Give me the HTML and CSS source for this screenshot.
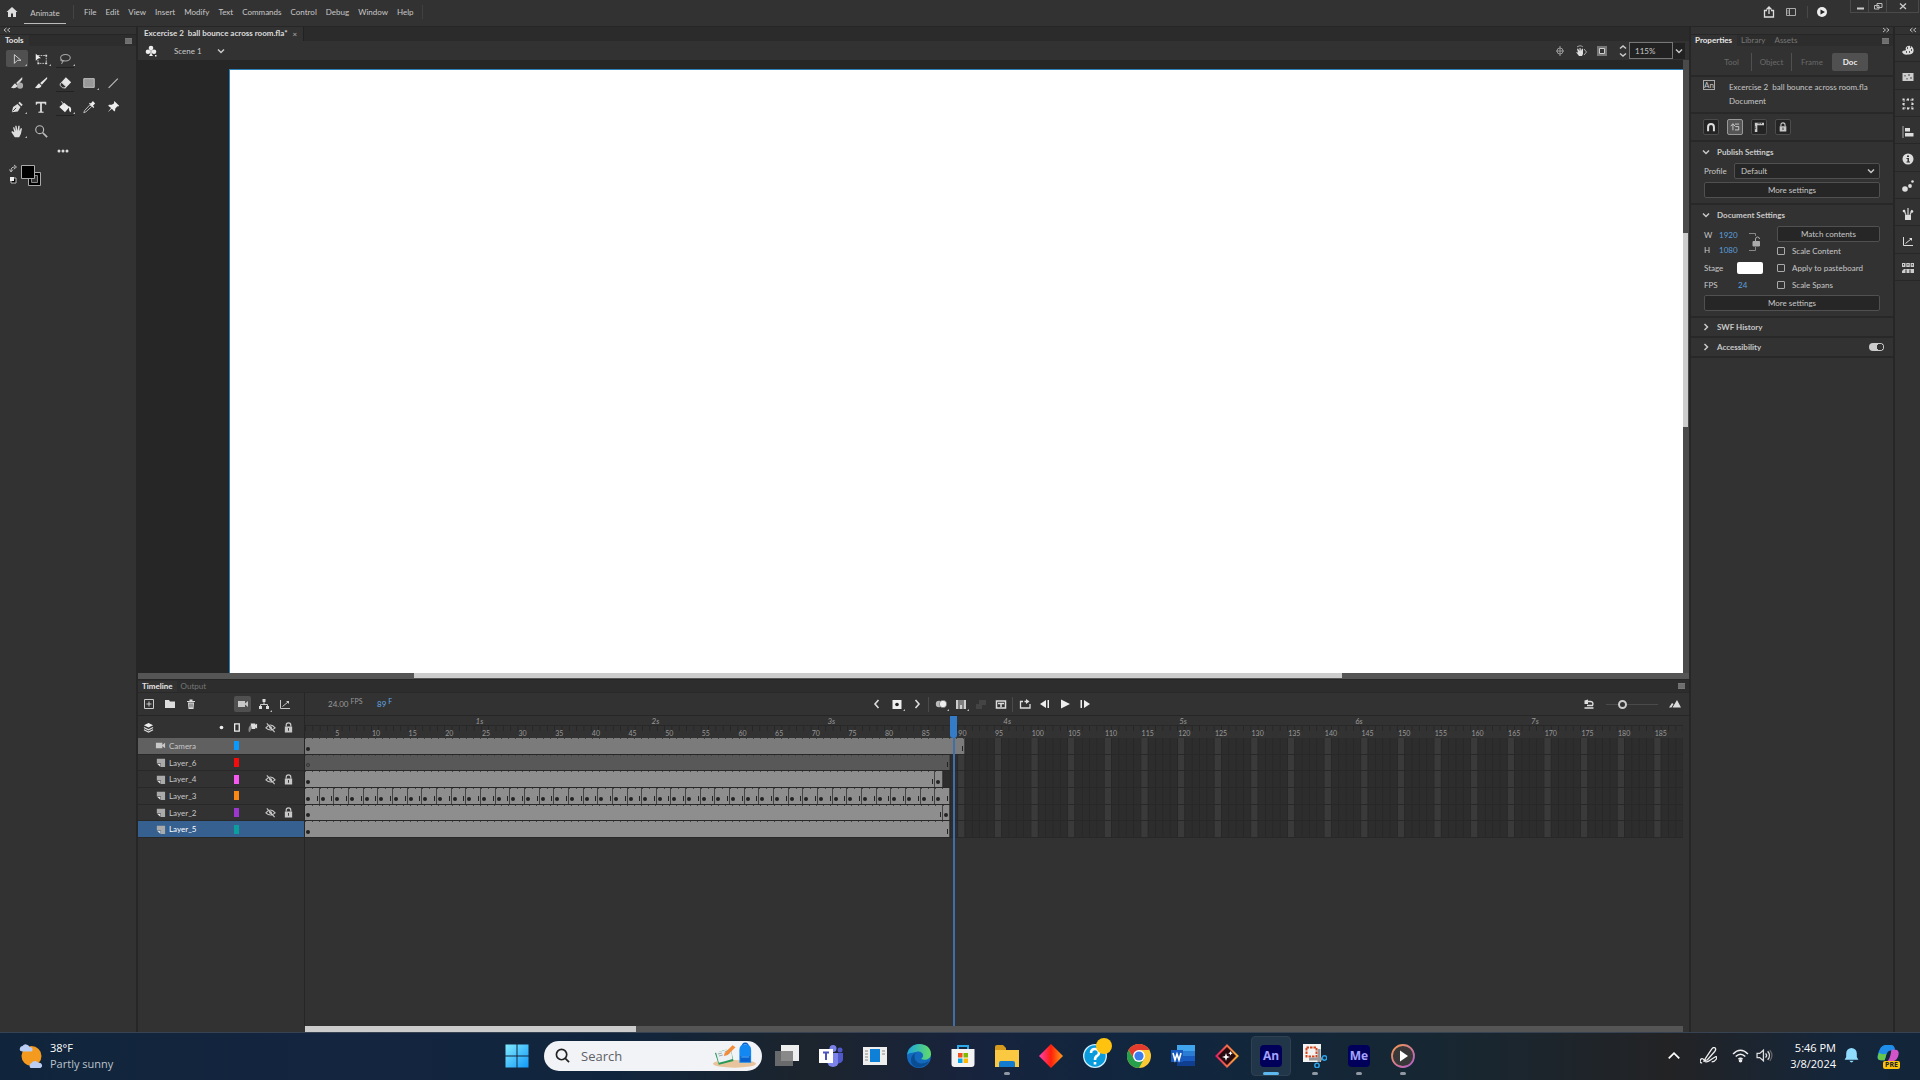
FILE: index.html
```html
<!DOCTYPE html>
<html lang="en">
<head>
  <meta charset="UTF-8">
  <meta name="viewport" content="width=device-width, initial-scale=1.0">
  <title>Animate</title>
  <link rel="stylesheet" href="styles.css">
</head>
<body>
  <!-- shared icons -->
  <svg class="sprite" aria-hidden="true">
    <symbol id="i-eye" viewBox="0 0 12 12"><path d="M1 6.500Q6 0 11 6.500Q6 11 1 6.500Z M2 1.500L10.500 11" fill="none" stroke="currentColor" stroke-width="1.200"/><circle cx="6" cy="6" r="1.500" fill="currentColor"/></symbol>
    <symbol id="i-lock" viewBox="0 0 12 12"><path d="M3.500 5V3.500a2.500 2.500 0 0 1 5 0V5" fill="none" stroke="currentColor" stroke-width="1.300"/><path fill-rule="evenodd" d="M2 5h8v6.500H2z M5.500 6.500v3h1v-3z" fill="currentColor"/></symbol>
    <symbol id="i-cam" viewBox="0 0 12 12"><path d="M1 3h7v6H1z M8 5.500L11 3v6L8 6.500z" fill="currentColor"/></symbol>
    <symbol id="i-layer" viewBox="0 0 12 12"><path d="M2 2h9v9H6.500V7H2z" fill="#aaa"/><path d="M2.500 7.500H6V11z" fill="#ddd"/></symbol>
    <symbol id="i-down" viewBox="0 0 10 10"><path d="M2 3.500L5 6.500L8 3.500" fill="none" stroke="currentColor" stroke-width="1.500"/></symbol>
    <symbol id="i-right" viewBox="0 0 10 10"><path d="M3.500 2L6.500 5L3.500 8" fill="none" stroke="currentColor" stroke-width="1.500"/></symbol>
    <symbol id="i-menu" viewBox="0 0 8 6"><path d="M0 0h7v6H0z" fill="#777"/><path d="M0 2h7M0 4h7" stroke="#555" stroke-width=".5"/></symbol>
    <symbol id="i-chev" viewBox="0 0 8 6"><path d="M3.500 1L1 3l2.500 2M7 1L4.500 3L7 5" fill="none" stroke="#bbb"/></symbol>
    <symbol id="i-graph" viewBox="0 0 12 12"><path d="M1.500 2v8.500H11M3.500 8.500L9 4" fill="none" stroke="currentColor"/><path d="M7 3h3v3z" fill="currentColor"/></symbol>
  </svg>

  <header class="topbar">
    <button class="home" aria-label="Home"><svg viewBox="0 0 12 12"><path d="M6 1L0.500 6H2v5h3V7.500h2V11h3V6h1.500z"/></svg></button>
    <span class="app-name">Animate</span>
    <nav class="menu">
      <button>File</button><button>Edit</button><button>View</button><button>Insert</button><button>Modify</button><button>Text</button><button>Commands</button><button>Control</button><button>Debug</button><button>Window</button><button>Help</button>
    </nav>
    <div class="top-actions">
      <button aria-label="Share"><svg viewBox="0 0 12 12" fill="none" stroke="#ddd" stroke-width="1.300"><path d="M4 4.500H1.500V11h9V4.500H8M6 8V1.500M3.500 3.500L6 1l2.500 2.500"/></svg></button>
      <button aria-label="Workspaces"><svg viewBox="0 0 12 12" fill="none" stroke="#aaa"><path d="M1.500 2.500h9v7h-9zM4.500 2.500v7"/><path d="M3 4v4" stroke="#888"/></svg></button>
      <button class="test" aria-label="Test movie"><svg viewBox="0 0 12 12"><circle cx="6" cy="6" r="5" fill="#eee"/><path d="M4.500 3.500v5L9 6z" fill="#222"/></svg></button>
    </div>
    <div class="win">
      <button aria-label="Minimize"><svg viewBox="0 0 12 12"><path d="M3 8.500h7" stroke="#ccc" stroke-width="2"/></svg></button>
      <button aria-label="Restore"><svg viewBox="0 0 12 12" fill="none" stroke="#bbb"><path d="M5 3.500h5v4H5zM2.500 5.500H7V9H2.500z"/></svg></button>
      <button class="close" aria-label="Close"><svg viewBox="0 0 12 12"><path d="M3 3.500L9 9M9 3.500L3 9" stroke="#ccc" stroke-width="1.300"/></svg></button>
    </div>
  </header>

  <main class="workspace">
    <aside class="tools">
      <div class="strip"><svg class="chev"><use href="#i-chev"/></svg></div>
      <div class="tabs"><span class="tab active">Tools</span><svg class="menu-icon"><use href="#i-menu"/></svg></div>
      <div class="tool-grid">
        <button class="on more" aria-label="Selection"><svg viewBox="0 0 16 16" fill="none" stroke="#ddd"><path d="M5 3l7.500 6.500H8.500L5 13z"/></svg></button>
        <button class="more" aria-label="Free transform"><svg viewBox="0 0 16 16"><path d="M4.500 4H14v9H4.500z" fill="none" stroke="#ccc" stroke-dasharray="2 1"/><path d="M2 2l6 5H5L2 10z" fill="#eee"/><path d="M13 3h2v2h-2zM13 12h2v2h-2zM4 12h2v2H4z" fill="#ddd"/></svg></button>
        <button class="more line" aria-label="Lasso"><svg viewBox="0 0 16 16" fill="none" stroke="#aaa" stroke-width="1.200"><ellipse cx="8.500" cy="6.500" rx="5.500" ry="3.700"/><path d="M4 8c-2 2 1 3 3 2M5 9.500c1 2 0 3-1 4"/></svg></button>
        <i></i><i></i>
        <button aria-label="Fluid brush"><svg viewBox="0 0 16 16"><path d="M14 1L7 8l2 2 5-6zM6 8.500c-2 0-2 3-5 4.500C4 15 8 13.500 8.500 11z" fill="#ddd"/><circle cx="11.500" cy="11" r="3.500" fill="#aaa"/></svg></button>
        <button aria-label="Brush"><svg viewBox="0 0 16 16"><path d="M15 1L7 8l2 2 6-7zM6 8.500c-2 0-2 3-5 4.500C4 15 8 13.500 8.500 11z" fill="#e5e5e5"/></svg></button>
        <button class="line" aria-label="Eraser"><svg viewBox="0 0 16 16"><path d="M9 1.500L15 7l-7 7.500L2 9z" fill="#e5e5e5"/><path d="M4.200 7.500L9 12l-1.500 1.500H5.500L2.500 11V9z" fill="#333" stroke="#ccc"/></svg></button>
        <button class="more" aria-label="Rectangle"><svg viewBox="0 0 16 16"><path d="M2 3h12v10H2z" fill="#999" stroke="#ccc"/></svg></button>
        <button aria-label="Line"><svg viewBox="0 0 16 16"><path d="M3 13.500L13.500 3" stroke="#bbb" stroke-width="1.400"/></svg></button>
        <button class="more" aria-label="Pen"><svg viewBox="0 0 16 16"><path d="M2 14L3.500 8l5-3.500L12 8l-3 5z M9.500 3.500L11 2l3.500 3.500L13 7z" fill="#ddd"/><path d="M3 13l4-4" stroke="#333"/></svg></button>
        <button aria-label="Text"><svg viewBox="0 0 16 16"><path d="M2 2h12v3.500h-1L12 4H9v9l2 .5v1H5v-1l2-.5V4H4L3 5.500H2z" fill="#ddd"/></svg></button>
        <button class="more line" aria-label="Paint bucket"><svg viewBox="0 0 16 16"><path d="M7 3l6 5-5 6L1.500 8z M12.500 7c3 1 3 4 2 7-2-1-2-3-2-6z" fill="#eee"/><path d="M4 1.500l4 6" stroke="#ddd"/></svg></button>
        <button aria-label="Eyedropper"><svg viewBox="0 0 16 16"><path d="M9 5.500L3 12l-1 2.500 2.500-1L11 7.500z" fill="none" stroke="#ccc"/><path d="M8 4l5 5 1-1-1.500-1.500L15 4 12.500 1 10 4 9 3z" fill="#eee"/></svg></button>
        <button aria-label="Asset warp"><svg viewBox="0 0 16 16"><path d="M9.500 1l5.500 5.500-1 1-1-.3L10.500 10v2l-1 1L6.700 10 2 14l3.800-5L2.500 6.500 3.500 5.500h3L9 4z" fill="#eee"/></svg></button>
        <button class="more" aria-label="Hand"><svg viewBox="0 0 16 16"><path d="M5.500 15L1.500 9 2.500 8l2.500 1.500L3.500 4l1.200-.5L6.500 8 6 2h1.500L8.500 8l1-6H11l-.3 6L12.500 4.500l1.200.5-1.200 6-2 4z" fill="#ddd"/></svg></button>
        <button aria-label="Zoom"><svg viewBox="0 0 16 16" fill="none" stroke="#bbb" stroke-width="1.300"><circle cx="6.500" cy="6.500" r="4.500"/><path d="M10 10l5 5" stroke-width="2"/></svg></button>
      </div>
      <button class="edit-tools" aria-label="Edit toolbar"><svg viewBox="0 0 12 4" fill="#ddd"><circle cx="2" cy="2" r="1.500"/><circle cx="6" cy="2" r="1.500"/><circle cx="10" cy="2" r="1.500"/></svg></button>
      <svg class="swatches" viewBox="0 0 36 24"><path d="M2 7c0-3 1-4 4-4M5 1l2.500 2L5 5M.5 5.500L2 8l2-2.500" fill="none" stroke="#bbb"/><path d="M2 14h5v5H2z" fill="#000" stroke="#bbb"/><path d="M1 13h4v4H1z" fill="#eee"/><path d="M19.500 8.500h12v13h-12z" fill="#000" stroke="#aaa"/><path d="M22.500 11.500h6v7h-6z" fill="#333" stroke="#888"/><path d="M12.500 1.500h13v13h-13z" fill="#000" stroke="#aaa"/></svg>
    </aside>

    <section class="center">
      <div class="doc-tabs"><div class="doc-tab">Excercise 2&nbsp; ball bounce across room.fla*<button aria-label="Close tab">×</button></div></div>
      <div class="scene-bar">
        <svg class="club" viewBox="0 0 12 12" fill="#eee"><circle cx="6" cy="3" r="2.300"/><circle cx="3" cy="6.700" r="2.300"/><circle cx="9" cy="6.700" r="2.300"/><path d="M5.300 4h1.400v5l1.300 2H4l1.300-2zM10 10h1.500v1.500H10z"/></svg>
        <span class="scene-name">Scene 1</span>
        <svg class="i10"><use href="#i-down"/></svg>
        <div class="scene-actions">
          <svg viewBox="0 0 12 12" fill="none" stroke="#999"><circle cx="6" cy="6" r="3"/><path d="M6 1v10M2 6h8"/></svg>
          <svg viewBox="0 0 12 12"><path d="M4 11L1 7l2 .5L2 4l1-.5L4.500 6V3h1l.5 3 1-2.500 1 .5V9l-1 2z" fill="#ddd"/><path d="M2 2c3-2 5-1 6 0M9 4l2.500 3L9 10" fill="none" stroke="#aaa"/></svg>
          <svg viewBox="0 0 12 12"><path d="M1 1h10v10H1z" fill="#777"/><path d="M3.500 3.500h5v5h-5z" fill="#333" stroke="#ccc"/></svg>
          <svg viewBox="0 0 12 12" fill="none" stroke="#ccc" stroke-width="1.500"><path d="M3 3.500L6 1l3 2.500M3 8.500L6 11l3-2.500"/></svg>
        </div>
        <input class="zoom" type="text" value="115%" aria-label="Zoom">
        <button class="zoom-open" aria-label="Zoom levels"><svg class="i10"><use href="#i-down"/></svg></button>
      </div>
      <div class="canvas">
        <div class="pasteboard"><div class="stage"></div></div>
        <div class="vscroll"><div class="vthumb"></div></div>
      </div>
      <div class="hscroll"><div class="hthumb"></div></div>

      <div class="timeline">
        <div class="tabs"><span class="tab active">Timeline</span><span class="tab">Output</span><svg class="menu-icon"><use href="#i-menu"/></svg></div>
        <div class="tl-toolbar">
          <div class="layer-tools">
            <button aria-label="New layer"><svg viewBox="0 0 12 12" fill="none" stroke="#ccc"><path d="M1.500 1.500h9v9h-9zM6 3.500v5M3.500 6h5"/></svg></button>
            <button aria-label="New folder"><svg viewBox="0 0 12 12"><path d="M1 2h4l1 1.500h5V10H1z" fill="#ddd"/></svg></button>
            <button aria-label="Delete"><svg viewBox="0 0 12 12"><path d="M2 3h8v1H2zM4.500 1.500h3V3h-3zM3 4.500h6L8.500 11h-5z" fill="#ddd"/><path d="M5 5.500v4M7 5.500v4" stroke="#555"/></svg></button>
            <button class="cam on" aria-label="Camera"><svg><use href="#i-cam"/></svg></button>
            <button class="more" aria-label="Parenting"><svg viewBox="0 0 12 12"><path d="M4.500 1h3v3h-3zM1 8h3v3H1zM8 8h3v3H8z" fill="#ddd"/><path d="M6 4v2M2.500 8V6.500h7V8" fill="none" stroke="#ccc"/></svg></button>
            <button aria-label="Graph"><svg><use href="#i-graph"/></svg></button>
          </div>
          <div class="frame-tools">
            <span class="fps">24.00 <sup>FPS</sup></span>
            <span class="frame-no">89 <sup>F</sup></span>
            <div class="play-tools">
              <button aria-label="Previous keyframe"><svg viewBox="0 0 12 12" fill="none" stroke="#ddd" stroke-width="1.600"><path d="M7.500 2L4 6l3.500 4"/></svg></button>
              <button class="more" aria-label="Insert keyframe"><svg viewBox="0 0 12 12"><path d="M1.500 2h9v9h-9z" fill="#eee"/><circle cx="6" cy="6.500" r="1.800" fill="#222"/></svg></button>
              <button aria-label="Next keyframe"><svg viewBox="0 0 12 12" fill="none" stroke="#ddd" stroke-width="1.600"><path d="M4.500 2L8 6l-3.500 4"/></svg></button>
              <hr>
              <button class="more" aria-label="Onion skin"><svg viewBox="0 0 12 12"><circle cx="4" cy="6" r="3.200" fill="#bbb"/><circle cx="8" cy="6" r="3.700" fill="#eee" stroke="#444" stroke-width=".5"/></svg></button>
              <button class="more" aria-label="Edit multiple frames"><svg viewBox="0 0 12 12"><path d="M1 2h2.500v9H1zM4.500 2h3v9h-3zM8.500 2H11v9H8.500z" fill="#ccc"/><path d="M6 2v5" stroke="#333"/></svg></button>
              <button aria-label="Create tween" disabled><svg viewBox="0 0 12 12"><path d="M4 2h7v5H4zM1 6h6v5H1z" fill="#444"/></svg></button>
              <button aria-label="Split"><svg viewBox="0 0 12 12"><path d="M1.500 3h9v7h-9z" fill="none" stroke="#ddd" stroke-width="1.500"/><path d="M6 5v4M3 5.500h6" stroke="#ddd" stroke-width="1.500"/></svg></button>
              <hr>
              <button aria-label="Loop"><svg viewBox="0 0 12 12"><path d="M4 3.500H1.500V10h9.500V6M5.500 3.500H8" fill="none" stroke="#ddd" stroke-width="1.300"/><path d="M7 1l3.500 2.500L7 6z" fill="#ddd"/></svg></button>
              <button aria-label="Step back"><svg viewBox="0 0 12 12"><path d="M7 2v8L1 6zM8.500 2H10v8H8.500z" fill="#eee"/></svg></button>
              <button aria-label="Play"><svg viewBox="0 0 12 12"><path d="M2 1.500L11 6l-9 4.500z" fill="#eee"/></svg></button>
              <button aria-label="Step forward"><svg viewBox="0 0 12 12"><path d="M1.500 2H3v8H1.500zM5 2l6 4-6 4z" fill="#eee"/></svg></button>
            </div>
            <div class="tl-zoom">
              <button aria-label="Reset zoom"><svg viewBox="0 0 12 12"><path d="M4 7.500h5.500Q11 4 7.500 3.500H4M1.500 10h9" fill="none" stroke="#ddd" stroke-width="1.400"/><path d="M5 1.500v4.500L1.500 6V2.500z" fill="#ddd"/></svg></button>
              <input type="range" min="0" max="100" value="28" aria-label="Timeline zoom">
              <button aria-label="Frame size"><svg viewBox="0 0 12 12"><path d="M3.500 9.500L8 2l4 7.500zM0 9.500L3 5l1.500 1-2 3.500z" fill="#ddd"/></svg></button>
            </div>
          </div>
        </div>
        <div class="tl-body">
          <div class="layers">
            <div class="layer-head">
              <svg viewBox="0 0 12 12" class="stack"><path d="M6 1l5 2.500L6 6 1 3.500z" fill="#eee"/><path d="M1 6l5 2.500L11 6M1 8.500L6 11l5-2.500" fill="none" stroke="#ddd" stroke-width="1.200"/></svg>
              <svg viewBox="0 0 12 12"><circle cx="6" cy="6" r="2" fill="#eee"/></svg>
              <svg viewBox="0 0 12 12"><path d="M4 2h5v8H4z" fill="none" stroke="#eee" stroke-width="1.400"/></svg>
              <svg viewBox="0 0 12 12"><path d="M4 1.500h5V3l2-1v5L9 6v1.500H5z" fill="#ddd"/><path d="M2 11c-1-4 0-6 2-8l1 4-2 4z" fill="#888"/></svg>
              <svg><use href="#i-eye"/></svg>
              <svg><use href="#i-lock"/></svg>
            </div>
            <div class="layer-rows" id="layerRows"></div>
          </div>
          <div class="frames">
            <div class="ruler"><div class="seconds" id="seconds"></div><div class="numbers" id="numbers"></div></div>
            <div class="frame-rows" id="frameRows"></div>
            <div class="playhead" id="playhead"></div>
          </div>
        </div>
        <div class="tl-scroll"><div class="tl-thumb"></div></div>
      </div>
    </section>

    <aside class="props">
      <div class="strip right"><svg class="chev flip"><use href="#i-chev"/></svg></div>
      <div class="tabs"><span class="tab active">Properties</span><span class="tab">Library</span><span class="tab">Assets</span><svg class="menu-icon"><use href="#i-menu"/></svg></div>
      <div class="subtabs"><button>Tool</button><button>Object</button><button>Frame</button><button class="on">Doc</button></div>
      <div class="doc-info">
        <span class="an-badge">An</span>
        <div><p>Excercise 2&nbsp; ball bounce across room.fla</p><p>Document</p></div>
      </div>
      <div class="snaps">
        <button aria-label="Snap to objects"><svg viewBox="0 0 12 12"><path d="M2.500 11V6a3.500 3.500 0 0 1 7 0v5" fill="none" stroke="#ddd" stroke-width="2.400"/></svg></button>
        <button class="on" aria-label="Snap align"><svg viewBox="0 0 12 12" fill="none" stroke="#ddd"><path d="M3.500 3v7M1 5l2.500-3L6 5M6 2.500h5M6.500 5.500h4v4H6"/></svg></button>
        <button aria-label="Rulers"><svg viewBox="0 0 12 12"><path d="M1 1h11v3H4v8H1z" fill="#ccc"/><path d="M5 1v1.500M7 1v1.500M9 1v1.500M1 6h1.500M1 8h1.500" stroke="#333"/></svg></button>
        <button aria-label="Lock guides"><svg><use href="#i-lock"/></svg></button>
      </div>
      <div class="section publish">
        <h3><svg class="i10"><use href="#i-down"/></svg>Publish Settings</h3>
        <div class="profile"><label for="profile">Profile</label><span class="select"><select id="profile"><option>Default</option></select><svg class="i10"><use href="#i-down"/></svg></span></div>
        <button class="btn">More settings</button>
      </div>
      <div class="section document">
        <h3><svg class="i10"><use href="#i-down"/></svg>Document Settings</h3>
        <div class="doc-grid">
          <div class="sizes">
            <div class="wh">
              <label for="w">W</label><input id="w" type="text" value="1920">
              <label for="h">H</label><input id="h" type="text" value="1080">
              <svg class="link" viewBox="0 0 14 20" fill="none" stroke="#888"><path d="M1 1.500h6.500V4M1 18.500h6.500V15"/><path d="M7.500 9V7a2 2 0 0 1 4 0" stroke="#aaa"/><path d="M5 9.500h6.500v4.500H5z" fill="#aaa" stroke="#aaa"/></svg>
            </div>
            <div class="stage-row"><label for="stageColor">Stage</label><input id="stageColor" type="color" value="#ffffff"></div>
            <div class="fps-row"><label for="fps">FPS</label><input id="fps" type="text" value="24"></div>
          </div>
          <div class="checks">
            <button class="btn">Match contents</button>
            <label><input type="checkbox">Scale Content</label>
            <label><input type="checkbox">Apply to pasteboard</label>
            <label><input type="checkbox">Scale Spans</label>
          </div>
        </div>
        <button class="btn">More settings</button>
      </div>
      <div class="section closed"><h3><svg class="i10"><use href="#i-right"/></svg>SWF History</h3></div>
      <div class="section closed"><h3><svg class="i10"><use href="#i-right"/></svg><label for="acc">Accessibility</label><input id="acc" class="switch" type="checkbox" checked></h3></div>
    </aside>

    <aside class="dock">
      <div class="strip right"><svg class="chev"><use href="#i-chev"/></svg></div>
      <div class="dock-icons">
        <button aria-label="Color"><svg viewBox="0 0 12 12"><path d="M0 8c1-2 3-1 4-2C2 2 9 0 11 4s-1 7-5 6.500C3 11 1 10 0 8z" fill="#ddd"/><path d="M5 4h1M8 3h1M9 6h1M7 8h1M4 8h1" stroke="#333" stroke-width="1.500"/></svg></button>
        <button aria-label="Swatches"><svg viewBox="0 0 12 12"><path d="M.5 2h11v8H.500z" fill="#ccc"/><path d="M2 4h2v1.500H2zM6 3h2v2H6zM8 6h2v2H8zM4 7h2v1.500H4z" fill="#888"/></svg></button>
        <button aria-label="Transform"><svg viewBox="0 0 12 12"><path d="M2 2h8v8H2z" fill="none" stroke="#aaa" stroke-dasharray="1 1"/><path d="M.5.5h2v2h-2zM5 .5h2v2H5zM9.500.5h2v2h-2zM.5 5h2v2h-2zM9.500 5h2v2h-2zM.5 9.500h2v2h-2zM5 9.500h2v2H5zM9.500 9.500h2v2h-2z" fill="#ddd"/></svg></button>
        <button aria-label="Align"><svg viewBox="0 0 12 12"><path d="M1 0v12" stroke="#aaa"/><path d="M3 2h5v3.500H3zM3 7h8.500v3.500H3z" fill="#ddd"/></svg></button>
        <button aria-label="Info"><svg viewBox="0 0 12 12"><circle cx="6" cy="6" r="5.500" fill="#ddd"/><path d="M5 2.500h2V4H5zM4.500 5H7v3.500h1v1H4.500v-1h1V6h-1z" fill="#333"/></svg></button>
        <button aria-label="Motion"><svg viewBox="0 0 12 12" fill="#ddd"><circle cx="3" cy="9" r="2.800"/><circle cx="8" cy="6" r="1.900"/><circle cx="10.500" cy="1.500" r="1.300"/></svg></button>
        <button aria-label="Brush library"><svg viewBox="0 0 12 12"><path d="M3 7h6v5H3z" fill="#ddd"/><path d="M2 2l2 5M6 0v7M10 2L8 7" stroke="#ccc" stroke-width="1.300"/><circle cx="2" cy="3" r="1.300" fill="#ddd"/><circle cx="10" cy="3.500" r="1.300" fill="#ddd"/></svg></button>
        <button aria-label="Motion graph"><svg><use href="#i-graph"/></svg></button>
        <button aria-label="Frame picker"><svg viewBox="0 0 12 12"><path d="M0 1h3.500v4H0zM4.300 1h3.500v4H4.300zM8.600 1H12v4H8.600zM0 9l2-2h10v4H0z" fill="#ccc"/><path d="M1.500 2v1.500M6 2v1.500M10.300 2v1.500M4 7.500V11M8 7.500V11" stroke="#333"/></svg></button>
      </div>
    </aside>
  </main>

  <footer class="taskbar">
    <div class="weather">
      <svg viewBox="0 0 24 30"><circle cx="13" cy="15" r="10" fill="#f39a1f"/><path d="M2 10a3 3 0 0 1 2-5 4 4 0 0 1 7 1 2.500 2.500 0 0 1 2 4.500H4zM12 27a3 3 0 0 1 1-5 4 4 0 0 1 7 0 2.700 2.700 0 0 1 2 5z" fill="#b9cdf5"/></svg>
      <div><p>38°F</p><p class="sky">Partly sunny</p></div>
    </div>
    <div class="apps">
      <button aria-label="Start"><svg viewBox="0 0 24 24"><defs><linearGradient id="win" x1="0" y1="0" x2="24" y2="24" gradientUnits="userSpaceOnUse"><stop stop-color="#83ecff"/><stop offset="1" stop-color="#0e97f8"/></linearGradient></defs><path d="M.500.500h11v11H.500zM12.500.500h11v11h-11zM.500 12.500h11v11H.500zM12.500 12.500h11v11h-11z" fill="url(#win)"/></svg></button>
      <div class="search">
        <svg class="glass" viewBox="0 0 16 16" fill="none" stroke="#222" stroke-width="1.800"><circle cx="7" cy="7" r="5.500"/><path d="M11 11l4 4"/></svg>
        <input type="text" placeholder="Search" aria-label="Search">
        <svg class="school" viewBox="0 0 46 28"><ellipse cx="23" cy="22" rx="22" ry="4" fill="#e8c49c"/><path d="M3 11l16-5 3 13-15 4z" fill="#279a58"/><path d="M4 10l7-1 8-4 2 12-7 2-7 2z" fill="#eef1f3"/><path d="M6 12l4-1M7 14l4-1M13 10l4-2M14 13l4-2" stroke="#9aa5ad"/><path d="M13 11l8-8 3 2-8 8-4 1z" fill="#f28c38"/><path d="M31 5q0-4 3-4t3 4" fill="none" stroke="#0a57c2" stroke-width="1.500"/><path d="M28 21V8q0-6 6-6t6 6v13z" fill="#1387f2"/><path d="M29 14h10v6H29z" fill="#0961cd"/><path d="M30 15h8" stroke="#57b7ff"/></svg>
      </div>
      <button aria-label="Task view"><svg viewBox="0 0 24 24"><path d="M6 1h18v16H6z" fill="#eee"/><path d="M0 7h18v15H0z" fill="#777" opacity=".85"/></svg></button>
      <button aria-label="Teams"><svg viewBox="0 0 24 24"><circle cx="14" cy="4.500" r="3.500" fill="#7b83eb"/><circle cx="21" cy="6" r="2.500" fill="#5059c9"/><path d="M8 9h12v8a6 6 0 0 1-12 0z" fill="#7b83eb"/><path d="M19 9h5v6a4 4 0 0 1-5 4z" fill="#5059c9"/><path d="M0 5h14v14H0z" fill="#fff"/><path d="M4 8.500h6M7 8.500V16" stroke="#4b53bc" stroke-width="2"/></svg></button>
      <button aria-label="News"><svg viewBox="0 0 24 24"><path d="M0 3h24v18H0z" fill="#eee"/><path d="M7 5h10v13H7z" fill="#0f80d7"/><path d="M2 7h3M2 10h3M2 13h3M2 16h3M19 7h3M19 10h3" stroke="#888"/></svg></button>
      <button aria-label="Edge"><svg viewBox="0 0 24 24"><defs><linearGradient id="edge"><stop stop-color="#1ba4e0"/><stop offset="1" stop-color="#62dc68"/></linearGradient></defs><circle cx="12" cy="12" r="12" fill="#1269bd"/><path d="M0 12C1-4 24-3 24 10c0 5-6 7-10 5 5-4 0-9-5-7-5 1-9 1-9 4z" fill="url(#edge)"/><path d="M8 10c-2 6 3 11 10 9l4-2C18 25 4 26 4 16c0-4 3-7 6-7z" fill="#0b4d93"/></svg></button>
      <button aria-label="Store"><svg viewBox="0 0 24 24"><path d="M7 6V2h10v4" fill="none" stroke="#2da8e8" stroke-width="2"/><path d="M.5 5h23v15a3 3 0 0 1-3 3h-17a3 3 0 0 1-3-3z" fill="#f3f3f3"/><path d="M7 9h4.500v4.500H7z" fill="#f05022"/><path d="M12.500 9H17v4.500h-4.500z" fill="#7fba00"/><path d="M7 14.500h4.500V19H7z" fill="#00a4ef"/><path d="M12.500 14.500H17V19h-4.500z" fill="#ffb900"/></svg></button>
      <button class="run" aria-label="File Explorer"><svg viewBox="0 0 24 24"><path d="M0 3q0-2 2-2h6l3 3v5H0z" fill="#d89a1c"/><path d="M0 6h24v17H0z" fill="#fbc941"/><path d="M4 23v-4q0-2 2-2h12q2 0 2 2v4z" fill="#127bd0"/></svg></button>
      <button aria-label="Photos"><svg viewBox="0 0 24 24"><defs><linearGradient id="dia"><stop stop-color="#ff3fb4"/><stop offset=".5" stop-color="#ff2008"/><stop offset="1" stop-color="#ff9e1c"/></linearGradient></defs><path d="M12 0l12 12-12 12L0 12z" fill="url(#dia)"/></svg></button>
      <button class="help" aria-label="Get Help"><svg viewBox="0 0 24 24"><circle cx="12" cy="12" r="11.300" fill="#0a9bdc" stroke="#cfefff" stroke-width="1.300"/><path d="M8 9q0-4 4-4t4 4q0 2-2 3t-2 4M12 18v2.500" fill="none" stroke="#fff" stroke-width="2.600"/></svg><i class="badge"></i></button>
      <button aria-label="Chrome"><svg viewBox="0 0 24 24"><circle cx="12" cy="12" r="12" fill="#fcc934"/><path d="M1.600 6A12 12 0 0 1 22.400 6H12L7 15z" fill="#e33b2e"/><path d="M1.600 6A12 12 0 0 0 12 24l5-9H7z" fill="#27a04b"/><circle cx="12" cy="12" r="6" fill="#fff"/><circle cx="12" cy="12" r="4.600" fill="#3b7ded"/></svg></button>
      <button aria-label="Word"><svg viewBox="0 0 24 24"><path d="M6 1h18v6H6z" fill="#41a5ee"/><path d="M6 7h18v5H6z" fill="#2b7cd3"/><path d="M6 12h18v5H6z" fill="#185abd"/><path d="M6 17h18v5H6z" fill="#103f91"/><path d="M0 6h12v12H0z" fill="#185abd"/><path d="M2 9l2 7 2-6 2 6 2-7" fill="none" stroke="#fff" stroke-width="1.600"/></svg></button>
      <button aria-label="Designer"><svg viewBox="0 0 24 24"><defs><linearGradient id="dia2"><stop stop-color="#e82262"/><stop offset="1" stop-color="#fbae35"/></linearGradient></defs><path d="M12 1.500L22.500 12 12 22.500 1.500 12z" fill="#260b10" stroke="url(#dia2)" stroke-width="2"/><path d="M11 9l1 3 3 1-3 1-1 3-1-3-3-1 3-1zM15.500 7l.7 1.600 1.500.6-1.500.7-.7 1.600-.7-1.600-1.500-.7 1.500-.6z" fill="#fff"/></svg></button>
      <button class="run current"><span class="adobe">An</span></button>
      <button class="run" aria-label="Snipping Tool"><svg viewBox="0 0 24 24"><path d="M0 0h18v18H0z" fill="#f3f3f3"/><path d="M3.500 3.500h10v9h-10z" fill="none" stroke="#d5441c" stroke-width="2" stroke-dasharray="2.500 1"/><path d="M16 5v13M6 15h13" stroke="#999" stroke-width="3"/><circle cx="14" cy="21.500" r="2.200" fill="none" stroke="#29a3ea" stroke-width="1.500"/><circle cx="21.500" cy="14" r="2.200" fill="none" stroke="#29a3ea" stroke-width="1.500"/></svg></button>
      <button class="run"><span class="adobe">Me</span></button>
      <button class="run" aria-label="Media Player"><svg viewBox="0 0 24 24"><defs><linearGradient id="ring" x1="0" y1="0" x2="1" y2="1"><stop stop-color="#f59a4d"/><stop offset="1" stop-color="#b05bd2"/></linearGradient></defs><circle cx="12" cy="12" r="11" fill="#383838" stroke="url(#ring)" stroke-width="1.800"/><path d="M9 6.500v11l8-5.500z" fill="#fff"/></svg></button>
    </div>
    <div class="tray">
      <button class="up" aria-label="Hidden icons"><svg viewBox="0 0 12 12"><path d="M1.500 8.500L6 4l4.500 4.500" fill="none" stroke="#fff" stroke-width="1.500"/></svg></button>
      <svg class="pen" viewBox="0 0 16 16" fill="none" stroke="#eee" stroke-width="1.200"><path d="M2 15c-3 0-2-4 0-4s2 3 4 3c3 0 6-4 9-5 2 0 0 5-4 5M5 11l6-9c2-3 5-1 3 2l-7 8-3 1z"/></svg>
      <svg viewBox="0 0 16 16" fill="none" stroke="#eee" stroke-width="1.400"><path d="M1 6.500q7-7 14 0M3.500 9q4.500-4.500 9 0M6 11.500q2-2 4 0"/><circle cx="8" cy="13" r="1" fill="#eee"/></svg>
      <svg viewBox="0 0 16 16" fill="none" stroke="#ddd" stroke-width="1.200"><path d="M1 6h2.500L7 3v10l-3.500-3H1zM9 6q2 2 0 4M11 4q3.500 4 0 8"/><path d="M13 3q4 5 0 10" stroke="#666"/></svg>
      <div class="clock"><p>5:46 PM</p><p>3/8/2024</p></div>
      <svg class="bell" viewBox="0 0 16 16" fill="#8fdcff"><path d="M1.500 12L3 9.500V6a5 5 0 0 1 10 0v3.500l1.500 2.500zM6 13h4q-2 3-4 0z"/></svg>
      <span class="copilot"><svg viewBox="0 0 24 24"><path d="M8 1h7q3 0 4 5l-6 1q-3 1-4 7l-1 3H4q-5 0-3-6 2-9 7-10z" fill="#1f8eea"/><path d="M2 9q5 3 8 1l-2 7H4q-5 0-2-8z" fill="#68c64a"/><path d="M15 6h5q4 1 2 7-2 5-6 5h-5q3-3 4-12z" fill="#d155c9"/></svg><b>PRE</b></span>
    </div>
  </footer>
  <script src="script.js"></script>
</body>
</html>
```

FILE: styles.css
```css
* {
  box-sizing: border-box;
}

body {
  margin: 0;
  height: 100vh;
  display: flex;
  flex-direction: column;
  overflow: hidden;
  background: #323232;
  color: #c8c8c8;
  font-family: Lato, "Open Sans", sans-serif;
  font-size: 8px;
  line-height: 12px;
}

p, h3 {
  margin: 0;
}

button, input, select {
  margin: 0;
  padding: 0;
  border: 0;
  background: none;
  color: inherit;
  font: inherit;
}

button {
  display: flex;
  align-items: center;
  justify-content: center;
}

svg {
  display: block;
  flex: none;
  width: 12px;
  height: 12px;
}

.sprite {
  position: absolute;
  width: 0;
  height: 0;
}

.i10 {
  width: 10px;
  height: 10px;
}

/* top bar */
.topbar {
  display: flex;
  align-items: center;
  height: 27px;
  padding-bottom: 2px;
  border-bottom: 1px solid #262626;
}

.home {
  width: 24px;
  fill: #ddd;
}

.app-name {
  width: 42px;
  height: 24px;
  border-bottom: 1px solid #bbb;
  line-height: 26px;
  text-align: center;
}

.menu {
  display: flex;
  align-items: center;
  gap: 9px;
  height: 14px;
  margin-left: 7px;
  padding: 0 8px 0 10px;
  border-left: 1px solid #444;
  border-right: 1px solid #404040;
}

.top-actions {
  display: flex;
  gap: 10px;
  margin-left: auto;
}

.test {
  padding-left: 8px;
  border-left: 1px solid #484848;
}

.win {
  display: flex;
  align-self: flex-start;
  height: 13px;
  margin: 0 1px 0 22px;
  border: 1px solid #4a4a4a;
  border-top: 0;
}

.win button {
  width: 18px;
  border-right: 1px solid #4a4a4a;
}

.win .close {
  width: 31px;
  border: 0;
}

/* panels */
.workspace {
  flex: 1;
  min-height: 0;
  display: flex;
}

.tools {
  width: 138px;
  border-right: 2px solid #262626;
}

.strip {
  display: flex;
  height: 8px;
  padding: 0 3px;
  border-bottom: 1px solid #262626;
}

.right {
  justify-content: flex-end;
}

.chev {
  width: 8px;
  height: 6px;
}

.flip {
  transform: scaleX(-1);
}

.tabs {
  display: flex;
  align-items: center;
  height: 11px;
  padding-right: 3px;
  background: #2d2d2d;
  line-height: 11px;
}

.tab {
  padding: 0 5px;
  color: #777;
}

.tab.active {
  background: #323232;
  color: #e6e6e6;
  font-weight: bold;
}

.menu-icon {
  width: 8px;
  height: 6px;
  margin-left: auto;
}

.tool-grid {
  display: grid;
  grid-template-columns: repeat(5, 24px);
  grid-auto-rows: 24px;
  padding: 0 5px;
}

.tool-grid button {
  margin: 4px 1px 3px;
  border-radius: 2px;
}

.tool-grid svg {
  width: 14px;
  height: 14px;
}

.tool-grid .line {
  box-shadow: 0 3px 0 -2px #222;
}

.on {
  background: #505050;
}

.more {
  position: relative;
}

.more::after {
  content: "";
  position: absolute;
  right: 1px;
  bottom: 1px;
  border: 1px solid #bbb;
  border-top-color: transparent;
  border-left-color: transparent;
}

.edit-tools {
  margin: 7px 0 11px 57px;
}

.edit-tools svg {
  height: 4px;
}

.swatches {
  width: 36px;
  height: 24px;
  margin-left: 9px;
}

.center {
  flex: 1;
  min-width: 0;
  display: flex;
  flex-direction: column;
}

.doc-tabs {
  display: flex;
  height: 14px;
  background: #2b2b2b;
}

.doc-tab {
  display: flex;
  gap: 5px;
  padding: 0 6px;
  border-right: 1px solid #222;
  background: #323232;
  color: #ddd;
  font-weight: bold;
}

.doc-tab button {
  color: #999;
}

.scene-bar {
  display: flex;
  align-items: center;
  height: 19px;
  padding: 0 4px 0 7px;
}

.scene-name {
  width: 42px;
  margin-left: 17px;
}

.scene-actions {
  display: flex;
  gap: 9px;
  margin-left: auto;
}

.zoom {
  width: 44px;
  height: 17px;
  padding: 0 5px;
  border: 1px solid #777;
  background: #222;
}

.zoom-open {
  width: 12px;
  height: 16px;
  background: #222;
}

.canvas {
  flex: 1;
  min-height: 0;
  display: flex;
}

.pasteboard {
  flex: 1;
  padding: 9px 0 0 91px;
  background: #262626;
}

.stage {
  height: 100%;
  border-top: 1px solid #2c82b8;
  border-left: 1px solid #2c82b8;
  background: #fff;
}

.vscroll {
  width: 6px;
  background: #4a4a4a;
}

.vthumb {
  width: 5px;
  height: 194px;
  margin-top: 173px;
  background: #ccc;
}

.hscroll {
  height: 7px;
  border-bottom: 1px solid #262626;
  background: #555;
}

.hthumb {
  width: 928px;
  height: 5px;
  margin-left: 276px;
  background: #ccc;
}

/* timeline */
.timeline {
  display: flex;
  flex-direction: column;
  height: 352px;
}

.timeline .tabs {
  height: 12px;
}

.timeline .tab {
  padding: 0 4px;
}

.tl-toolbar {
  display: flex;
  height: 24px;
  border-top: 1px solid #292929;
  border-bottom: 1px solid #262626;
}

.layer-tools {
  display: flex;
  align-items: center;
  width: 167px;
  border-right: 1px solid #262626;
}

.layer-tools button {
  width: 21px;
  height: 16px;
}

.layer-tools .cam {
  width: 17px;
  margin: 0 2px 0 33px;
  border-radius: 2px;
}

.layer-tools .on::after {
  content: none;
}

.frame-tools {
  flex: 1;
  display: flex;
  align-items: center;
}

sup {
  font-size: 7px;
  line-height: 7px;
  vertical-align: 3px;
}

.fps {
  width: 49px;
  margin-left: 23px;
  color: #999;
}

.frame-no {
  width: 32px;
  color: #62a8e8;
}

.play-tools {
  display: flex;
  align-items: center;
  margin-left: 458px;
}

.play-tools button {
  width: 20px;
  height: 14px;
}

.play-tools .more::after, .layer-tools .more::after {
  right: 2px;
  bottom: 0;
}

hr {
  width: 1px;
  height: 15px;
  margin: 0 2px 0 1px;
  border: 0;
  background: #4a4a4a;
}

.tl-zoom {
  display: flex;
  align-items: center;
  gap: 11px;
  margin-left: auto;
  padding-right: 8px;
}

.tl-zoom input {
  appearance: none;
  width: 52px;
  height: 9px;
  background: linear-gradient(#4a4a4a, #4a4a4a) center / 100% 1px no-repeat;
}

.tl-zoom input::-webkit-slider-thumb {
  appearance: none;
  width: 9px;
  height: 9px;
  border: 2px solid #ccc;
  border-radius: 50%;
  background: #323232;
}

.tl-body {
  flex: 1;
  min-height: 0;
  display: flex;
}

.layers {
  width: 167px;
  border-right: 1px solid #262626;
}

.layer-head, .layer {
  display: grid;
  grid-template-columns: 1fr 14px 16px 17px 18px 18px;
  align-items: center;
  justify-items: center;
  padding-right: 7px;
}

.layer-head {
  height: 22px;
}

.stack {
  justify-self: start;
  margin-left: 5px;
}

.layer-head svg, .layer svg {
  width: 11px;
  height: 11px;
}

.layer-rows, .frame-rows {
  display: flex;
  flex-direction: column;
  height: 100px;
}

.layer, .frame-row {
  flex: 1;
  min-height: 0;
  border-bottom: 1px solid #282828;
}

.layer-name {
  justify-self: start;
  display: flex;
  align-items: center;
  gap: 3px;
  padding-left: 17px;
}

.layer.camera {
  background: #606060;
}

.layer.selected {
  background: #35608f;
  color: #fff;
}

.chip {
  grid-column: 3;
  width: 5px;
  height: 9px;
}

.frames {
  position: relative;
  flex: 1;
  min-width: 0;
  padding-right: 6px;
}

.seconds, .numbers, .frame-row {
  display: grid;
  grid-template-columns: repeat(188, minmax(0, 1fr));
}

.seconds {
  height: 10px;
  border-bottom: 1px solid #282828;
  background: linear-gradient(to right, transparent 80%, #272727 80%, #272727 82%, transparent 82%) 0 0 / calc(500% / 188) 100%;
  color: #999;
  font-style: italic;
}

.numbers {
  height: 12px;
  background:
    linear-gradient(to right, #262626 1px, transparent 1px) 0 0 / calc(100% / 188) 5px repeat-x;
  color: #999;
  font-size: 7px;
  line-height: 14px;
}

.seconds span, .numbers span {
  padding-left: 1px;
  white-space: nowrap;
}

.seconds span {
  padding-left: 2px;
  line-height: 11px;
}

.frame-row {
  position: relative;
  background:
    linear-gradient(to right, #272727 1px, transparent 1px) 0 0 / calc(100% / 188) 100%,
    linear-gradient(to right, #2d2d2d 80%, #3a3a3a 80%) 0 0 / calc(500% / 188) 100%;
}

.span {
  grid-row: 1;
  display: flex;
  align-items: flex-end;
  justify-content: space-between;
  padding: 0 1px 3px;
  border-right: 1px solid #444;
  background:
    linear-gradient(to right, #444 1px, transparent 1px) 0 0 / 7px 1px repeat-x,
    #8e8e8e;
}

.span.cam-span {
  background-color: #7b7b7b;
}

.span.empty {
  background-color: #585858;
}

.dot {
  width: 4px;
  height: 4px;
  border-radius: 50%;
  background: #222;
}

.empty .dot {
  border: 1px solid #333;
  background: none;
}

.end {
  width: 1px;
  height: 5px;
  background: #222;
}

.playhead {
  position: absolute;
  top: 0;
  bottom: 0;
  width: 7px;
  background: linear-gradient(#3e70a8, #3e70a8) center / 2px 100% no-repeat;
}

.playhead::before {
  content: "";
  display: block;
  height: 22px;
  border-radius: 0 0 3px 3px;
  background: #347bc8;
}

.tl-scroll {
  height: 6px;
  margin: 0 6px 0 167px;
  background: #555;
}

.tl-thumb {
  width: 331px;
  height: 6px;
  background: #ccc;
}

/* properties */
.props {
  width: 206px;
  border-left: 2px solid #262626;
  border-right: 2px solid #262626;
}

.props .tab {
  padding: 0 5px 0 4px;
}

.subtabs {
  display: flex;
  align-items: center;
  height: 31px;
  padding: 3px 0 0 21px;
  border-bottom: 2px solid #282828;
  color: #6a6a6a;
}

.subtabs button {
  width: 40px;
  height: 18px;
  border-right: 1px solid #505050;
}

.subtabs button:nth-child(3) {
  border: 0;
}

.subtabs .on {
  width: 36px;
  border: 0;
  border-radius: 2px;
  color: #eee;
  font-weight: bold;
}

.doc-info {
  display: flex;
  height: 37px;
  padding: 3px 12px 0;
  border-bottom: 2px solid #282828;
}

.doc-info div {
  margin-left: 14px;
}

.doc-info p {
  line-height: 14px;
}

.an-badge {
  width: 12px;
  height: 10px;
  border: 1px solid #aaa;
  line-height: 8px;
  text-align: center;
}

.snaps {
  display: flex;
  align-items: center;
  gap: 8px;
  height: 28px;
  padding: 0 12px;
  border-bottom: 2px solid #282828;
}

.snaps button {
  width: 16px;
  height: 16px;
  border: 1px solid #4c4c4c;
  border-radius: 2px;
  background: #242424;
}

.snaps .on {
  border-color: #999;
  background: #555;
}

.snaps svg {
  width: 10px;
  height: 10px;
}

.section {
  padding: 4px 13px 5px;
  border-bottom: 2px solid #282828;
}

.section h3 {
  display: flex;
  align-items: center;
  gap: 6px;
  margin-left: -3px;
  font-size: 8px;
  font-weight: bold;
}

.publish h3 {
  margin-bottom: 5px;
}

.btn {
  width: 100%;
  height: 16px;
  border: 1px solid #505050;
  border-radius: 2px;
  background: #262626;
}

.profile {
  display: flex;
  align-items: center;
  justify-content: space-between;
  margin-bottom: 3px;
}

.select {
  position: relative;
  width: 146px;
}

.select select {
  display: block;
  appearance: none;
  width: 100%;
  height: 16px;
  padding: 0 6px;
  border: 1px solid #505050;
  border-radius: 2px;
  background: #262626;
}

.select svg {
  position: absolute;
  top: 3px;
  right: 4px;
}

.document h3 {
  margin-bottom: 5px;
}

.doc-grid {
  display: flex;
  justify-content: space-between;
  margin-bottom: 2px;
}

.sizes input[type="text"] {
  width: 20px;
  color: #5b9fdc;
}

.wh {
  display: grid;
  grid-template-columns: 15px 29px auto;
  grid-auto-rows: 15px;
  align-items: center;
  padding-top: 1px;
}

.link {
  grid-area: 1 / 3 / 3 / 4;
  width: 14px;
  height: 20px;
}

.stage-row, .fps-row {
  display: flex;
  align-items: center;
}

.stage-row {
  height: 22px;
}

.stage-row label {
  width: 33px;
}

.stage-row input {
  appearance: none;
  width: 26px;
  height: 12px;
}

.stage-row input::-webkit-color-swatch-wrapper {
  padding: 0;
}

.stage-row input::-webkit-color-swatch {
  border: 0;
  border-radius: 2px;
}

.fps-row label {
  width: 34px;
}

.checks {
  width: 103px;
}

.checks label {
  display: flex;
  align-items: center;
  gap: 7px;
  height: 17px;
}

.checks input {
  appearance: none;
  width: 8px;
  height: 8px;
  border: 1px solid #aaa;
  border-radius: 1px;
}

.closed {
  padding: 3px 13px;
}

.switch {
  appearance: none;
  width: 15px;
  height: 8px;
  margin: 0 -4px 0 auto;
  border-radius: 4px;
  background: radial-gradient(circle at 11px 4px, #333 3px, #ccc 3px);
}

.dock {
  width: 25px;
}

.dock-icons {
  display: flex;
  flex-direction: column;
  height: 246px;
}

.dock-icons button {
  flex: 1;
  padding-top: 3px;
  border-bottom: 1px solid #272727;
  color: #ddd;
}

/* taskbar */
.taskbar {
  display: grid;
  grid-template-columns: 1fr auto 1fr;
  height: 48px;
  padding-bottom: 2px;
  border-top: 1px solid #374352;
  background: linear-gradient(to right, #10253b, #14253f 18%, #10253d 32%, #1c242d 42%, #18233c 50%, #10263f 60%, #162733 74%, #232325 87%, #14263b 96%, #122539);
  color: #fff;
  font-family: "Open Sans", "Noto Sans", sans-serif;
  font-size: 11px;
  line-height: 16px;
}

.weather {
  display: flex;
  align-items: center;
  gap: 7px;
  padding-left: 18px;
}

.weather svg {
  width: 25px;
  height: 30px;
}

.sky {
  color: #bbc3cc;
}

.apps {
  display: flex;
  align-items: center;
}

.apps button {
  position: relative;
  width: 44px;
  height: 40px;
}

.apps button svg {
  width: 24px;
  height: 24px;
}

.search {
  display: flex;
  align-items: center;
  width: 218px;
  height: 30px;
  margin: 0 3px 0 5px;
  padding: 0 5px 0 11px;
  border-radius: 15px;
  background: #f1f3f6;
}

.glass {
  width: 15px;
  height: 15px;
}

.search input {
  flex: 1;
  min-width: 0;
  padding-left: 11px;
  font-size: 13px;
}

.search input::placeholder {
  color: #5e6165;
}

.school {
  width: 45px;
  height: 28px;
}

.run::after {
  content: "";
  position: absolute;
  bottom: 1px;
  width: 6px;
  height: 3px;
  border-radius: 2px;
  background: #8f98a3;
}

.apps .current {
  width: 40px;
  margin: 0 2px;
  border: 1px solid #2f4050;
  border-radius: 4px;
  background: #22364a;
}

.current::after {
  bottom: 0;
  width: 16px;
  background: #5cb8ee;
}

.adobe {
  width: 22px;
  height: 22px;
  border-radius: 4px;
  background: #00005b;
  color: #a5a2ff;
  font-size: 12px;
  font-weight: bold;
  line-height: 22px;
}

.badge {
  position: absolute;
  top: 2px;
  right: 5px;
  width: 16px;
  height: 16px;
  border-radius: 50%;
  background: #ffc20e;
}

.tray {
  display: flex;
  align-items: center;
  justify-content: flex-end;
  gap: 7px;
  padding-right: 20px;
}

.tray svg {
  width: 17px;
  height: 17px;
}

.tray .up, .tray .up svg {
  width: 14px;
}

.tray .pen {
  margin: 0 8px 0 12px;
}

.clock {
  margin-left: 10px;
  text-align: right;
}

.tray .bell {
  margin-right: 10px;
}

.copilot {
  position: relative;
}

.tray .copilot svg {
  width: 23px;
  height: 23px;
}

.copilot b {
  position: absolute;
  right: 0;
  bottom: -2px;
  padding: 0 2px;
  border-radius: 2px;
  background: #fdc20f;
  color: #222;
  font-size: 7px;
  line-height: 8px;
}
```

FILE: script.js
```javascript
const FRAMES = 188;
const CURRENT = 89;

// spans: [first frame, last frame]
const layers = [
  { name: "Camera", color: "#0a99ff", cls: "camera", spanCls: "cam-span", icon: "i-cam", spans: [[1, 90]] },
  { name: "Layer_6", color: "#f30d0d", spanCls: "empty", spans: [[1, 88]] },
  { name: "Layer_4", color: "#f659f0", locked: true, spans: [[1, 86], [87, 87]] },
  { name: "Layer_3", color: "#fb8716", spans: [] },
  { name: "Layer_2", color: "#9a38ce", locked: true, spans: [[1, 87], [88, 88]] },
  { name: "Layer_5", color: "#0a9e9c", cls: "selected", spans: [[1, 88]] }
];

for (let f = 1; f < 88; f += 2) {
  layers[3].spans.push([f, f + 1]);
}

function icon(id) {
  return `<svg><use href="#${id}"/></svg>`;
}

const layerRows = document.getElementById("layerRows");
const frameRows = document.getElementById("frameRows");

layers.forEach(layer => {
  const row = document.createElement("div");
  row.className = "layer " + (layer.cls || "");
  row.innerHTML = `<span class="layer-name">${icon(layer.icon || "i-layer")}${layer.name}</span>
    <i class="chip" style="background:${layer.color}"></i>` +
    (layer.locked ? `<i></i>${icon("i-eye")}${icon("i-lock")}` : "");
  layerRows.appendChild(row);

  const frames = document.createElement("div");
  frames.className = "frame-row";
  frames.innerHTML = layer.spans.map(([from, to]) =>
    `<div class="span ${layer.spanCls || ""}" style="grid-column:${from} / ${to + 1}"><i class="dot"></i>${to > from ? '<i class="end"></i>' : ""}</div>`
  ).join("");
  frameRows.appendChild(frames);
});

let numbers = "";
for (let f = 5; f <= FRAMES; f += 5) {
  numbers += `<span style="grid-column:${f}">${f}</span>`;
}
document.getElementById("numbers").innerHTML = numbers;

let seconds = "";
for (let s = 1; s * 24 <= FRAMES; s++) {
  seconds += `<span style="grid-column:${s * 24}">${s}s</span>`;
}
document.getElementById("seconds").innerHTML = seconds;

// 6px of right padding sits outside the frame grid
document.getElementById("playhead").style.left = `calc((100% - 6px) * ${(CURRENT - 1) / FRAMES})`;
```
